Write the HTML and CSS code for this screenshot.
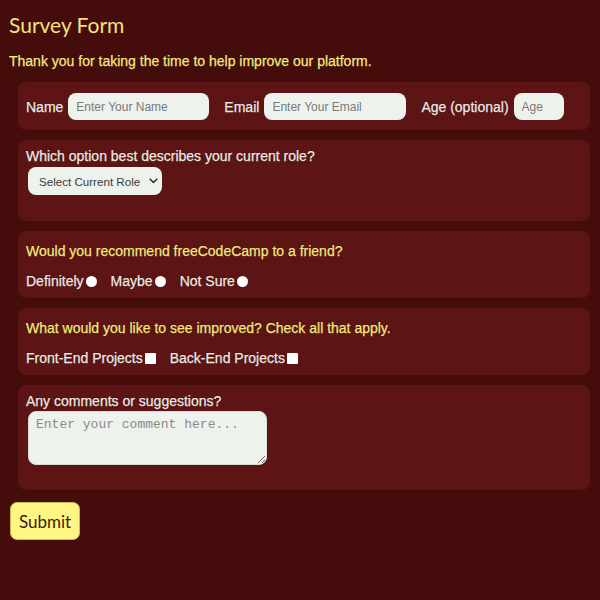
FILE: index.html
```html
<!DOCTYPE html>
<html lang="en">
<head>
<meta charset="utf-8">
<title>Survey Form</title>
<link rel="stylesheet" href="styles.css">
</head>
<body>
<main class="page">
  <h1 class="title">Survey Form</h1>
  <p class="intro">Thank you for taking the time to help improve our platform.</p>
  <form class="form">
    <fieldset class="card card-row">
      <label class="lbl" for="name">Name</label>
      <input class="field w-name" id="name" type="text" placeholder="Enter Your Name">
      <label class="lbl" for="email">Email</label>
      <input class="field w-email" id="email" type="email" placeholder="Enter Your Email">
      <label class="lbl" for="age">Age (optional)</label>
      <input class="field w-age" id="age" type="number" placeholder="Age">
    </fieldset>

    <fieldset class="card card-select">
      <label class="lbl block" for="role">Which option best describes your current role?</label>
      <div class="select-wrap">
        <select class="select" id="role">
          <option>Select Current Role</option>
        </select>
        <svg class="chev" width="9" height="6" viewBox="0 0 9 6"><path d="M1.2 1.2 L4.5 4.5 L7.8 1.2" fill="none" stroke="#333" stroke-width="1.6" stroke-linecap="round" stroke-linejoin="round"/></svg>
      </div>
    </fieldset>

    <fieldset class="card card-q">
      <p class="q">Would you recommend freeCodeCamp to a friend?</p>
      <div class="opts">
        <label class="opt">Definitely<input class="radio" type="radio" name="rec"></label>
        <label class="opt">Maybe<input class="radio" type="radio" name="rec"></label>
        <label class="opt">Not Sure<input class="radio" type="radio" name="rec"></label>
      </div>
    </fieldset>

    <fieldset class="card card-q">
      <p class="q">What would you like to see improved? Check all that apply.</p>
      <div class="opts">
        <label class="opt">Front-End Projects<input class="check" type="checkbox"></label>
        <label class="opt">Back-End Projects<input class="check" type="checkbox"></label>
      </div>
    </fieldset>

    <fieldset class="card card-comment">
      <label class="lbl block" for="comment">Any comments or suggestions?</label>
      <textarea class="comment" id="comment" placeholder="Enter your comment here..."></textarea>
    </fieldset>

    <button class="submit" type="submit">Submit</button>
  </form>
</main>
</body>
</html>
```

FILE: styles.css
```css
html, body {
  margin: 0;
  padding: 0;
  background: #450c0c;
}

body {
  font-family: "Liberation Sans", Arial, Helvetica, sans-serif;
  color: #efeae4;
  min-height: 600px;
}

.page {
  padding: 8px 10px 40px 9px;
}

.title {
  margin: 0;
  font-family: "Lato", "Open Sans", sans-serif;
  font-weight: 400;
  font-size: 21px;
  line-height: 33px;
  color: #f6e37c;
}

.intro {
  margin: 10px 0 11px;
  font-size: 14px;
  line-height: 20px;
  color: #f7e97e;
  -webkit-text-stroke: 0.25px #f7e97e;
  text-shadow: 0 0 1px rgba(0,0,0,0.5);
}

.form {
  display: flex;
  flex-direction: column;
  align-items: flex-start;
}

.card {
  box-sizing: border-box;
  width: calc(100% - 9px);
  margin: 0 0 10px 9px;
  border: 0;
  border-radius: 8px;
  background: #5c1414;
  padding: 10px 8px 7px;
  min-width: 0;
}

.lbl, .opt {
  font-size: 14px;
  line-height: 20px;
  color: #efeae4;
  -webkit-text-stroke: 0.25px #efeae4;
  text-shadow: 0 0 1px rgba(0,0,0,0.6);
}

.block { display: block; }

.card-row {
  display: flex;
  align-items: center;
  padding: 11px 8px 10px;
}

.card-row .lbl { margin-right: 5px; }

.field {
  box-sizing: border-box;
  height: 27px;
  border: 0;
  border-radius: 8px;
  background: #eef2ec;
  padding: 0 8px;
  font-family: "Liberation Sans", Arial, sans-serif;
  font-size: 12px;
  color: #333;
  margin-right: 15px;
  outline: none;
}

.field::placeholder { color: #7a7a7a; }

.w-name { width: 141px; }
.w-email { width: 142px; }
.w-age { width: 50px; margin-right: 0; -moz-appearance: textfield; }
.w-age::-webkit-inner-spin-button, .w-age::-webkit-outer-spin-button { -webkit-appearance: none; margin: 0; }

.card-select {
  padding: 6px 8px 26px;
}

.select-wrap {
  position: relative;
  display: inline-block;
  margin-left: 2px;
  margin-top: 1px;
}

.select {
  -webkit-appearance: none;
  appearance: none;
  box-sizing: border-box;
  width: 134px;
  height: 28px;
  border: 0;
  border-radius: 8px;
  background: #eef2ec;
  padding: 0 14px 0 11px;
  font-family: "Liberation Sans", Arial, sans-serif;
  font-size: 11.6px;
  color: #3a3a3a;
  display: block;
}

.chev {
  position: absolute;
  right: 4px;
  top: 11px;
  pointer-events: none;
}

.q {
  margin: 0 0 10px;
  font-size: 14px;
  line-height: 20px;
  color: #f7e97e;
  -webkit-text-stroke: 0.25px #f7e97e;
  text-shadow: 0 0 1px rgba(0,0,0,0.6);
}

.opts {
  display: flex;
  align-items: center;
  gap: 14px;
  height: 20px;
}

.opt {
  display: inline-flex;
  align-items: center;
}

.radio {
  -webkit-appearance: none;
  appearance: none;
  width: 11px;
  height: 11px;
  margin: 0 0 0 2px;
  border-radius: 50%;
  background: #ffffff;
  border: 0;
}

.check {
  -webkit-appearance: none;
  appearance: none;
  width: 11px;
  height: 11px;
  margin: 0 0 0 2px;
  border-radius: 1px;
  background: #ffffff;
  border: 0;
}

.card-comment {
  padding: 6px 8px 25px;
}

.comment {
  display: block;
  box-sizing: border-box;
  width: 239px;
  height: 54px;
  margin-left: 2px;
  border: 1px solid #d9dcd6;
  border-radius: 8px;
  background: #eef2ec;
  padding: 5px 7px;
  font-family: "Liberation Mono", "DejaVu Sans Mono", monospace;
  font-size: 13px;
  color: #333;
  resize: both;
  outline: none;
}

.comment::placeholder { color: #8a8a8a; }

.submit {
  box-sizing: border-box;
  margin: 2px 0 0 1px;
  width: 70px;
  height: 38px;
  border: 1px solid #c8b94c;
  border-radius: 7px;
  background: #fff684;
  font-family: "Lato", "Open Sans", sans-serif;
  font-size: 17px;
  color: #3b1a0c;
  padding: 0;
  cursor: pointer;
}
```
